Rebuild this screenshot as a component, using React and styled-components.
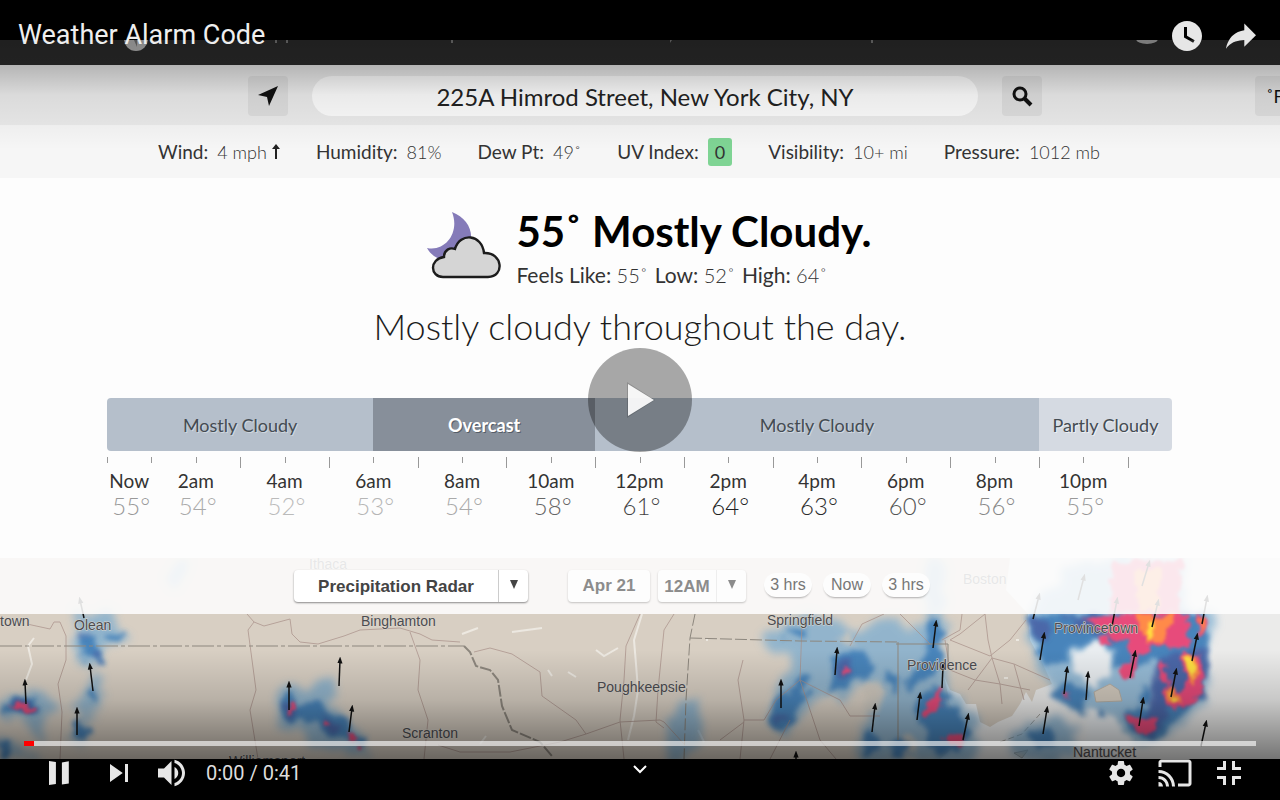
import React from "react";
import styled, { createGlobalStyle } from "styled-components";

const GlobalStyle = createGlobalStyle`
  * { box-sizing: border-box; }
  body { margin: 0; background: #000; font-family: Lato, "Liberation Sans", sans-serif; }
  button, input, select { font: inherit; color: inherit; border: 0; margin: 0; padding: 0; background: none; }
  button { cursor: pointer; }
  h1, h2, p { margin: 0; font-weight: 400; }
`;

const Player = styled.main`
  position: relative;
  min-height: 100vh;
  padding: 40px 0 41px;
  overflow: hidden;
  background: #000;
`;

const Frame = styled.div`
  overflow: hidden;
  background: #fdfdfd;
  color: #333;
`;

const SiteBar = styled.div`
  height: 25px;
  background: #2c2c2c;
  svg { display: block; width: 100%; height: 100%; }
`;

const SearchRow = styled.div`
  display: grid;
  grid-template-columns: 1fr minmax(0, 794px) 1fr;
  padding: 11px 0 9px 10px;
  background: #ebebeb;
`;

const SearchForm = styled.form`
  grid-column: 2;
  display: flex;
  gap: 24px;
`;

const SquareButton = styled.button`
  flex: none;
  display: flex;
  align-items: center;
  justify-content: center;
  width: 40px;
  height: 40px;
  border-radius: 4px;
  background: #dedede;
  color: #111;
`;

const UnitButton = styled(SquareButton)`
  justify-self: end;
  margin-right: -15px;
  font-size: 18px;
`;

const AddressInput = styled.input`
  flex: 1;
  min-width: 0;
  height: 40px;
  border-radius: 20px;
  background: #fcfcfc;
  color: #222;
  font-size: 24px;
  text-align: center;
  outline: none;
`;

const Metrics = styled.div`
  display: flex;
  justify-content: center;
  align-items: center;
  gap: 36px;
  height: 53px;
  padding-right: 22px;
  background: #f6f6f6;
  font-size: 19px;
  line-height: 28px;
  white-space: nowrap;
`;

const Metric = styled.div`
  display: flex;
  gap: 9px;
`;

const MetricValue = styled.span`
  font-size: 18px;
  font-weight: ${(p) => (p.$badge ? 400 : 300)};
  padding: ${(p) => (p.$badge ? "0 7px" : "0")};
  border-radius: 3px;
  background: ${(p) => (p.$badge ? "#7fd494" : "transparent")};
  svg { margin-left: 5px; }
`;

const Current = styled.section`
  display: flex;
  justify-content: center;
  gap: 14px;
  padding: 32px 0 0 18px;
  svg { display: block; }
`;

const Temperature = styled.h1`
  color: #000;
  font-size: 42px;
  font-weight: 700;
  line-height: 43px;
  white-space: nowrap;
`;

const Range = styled.p`
  display: flex;
  gap: 7px;
  padding-top: 8px;
  font-size: 21px;
  line-height: 28px;
  white-space: nowrap;
`;

const Reading = styled.span`
  b { font-weight: 400; }
  span { font-size: 20px; font-weight: 300; }
`;

const Outlook = styled.h2`
  padding-top: 13px;
  font-size: 36px;
  font-weight: 300;
  line-height: 48px;
  text-align: center;
  color: #1c1c1c;
`;

const Timeline = styled.section`
  padding: 48px 108px 38px 107px;
`;

const Segments = styled.div`
  display: flex;
  height: 53px;
  border-radius: 4px;
  overflow: hidden;
`;

const segmentTones = {
  mostly: ["#b5bfcb", "#444b52", "#d0d7de"],
  overcast: ["#878f9a", "#fff", "#555d68"],
  partly: ["#d5dae2", "#444b52", "#eceff3"],
};

const Segment = styled.div`
  flex: ${(p) => p.$hours} 1 0;
  min-width: 0;
  display: flex;
  align-items: center;
  justify-content: center;
  background: ${(p) => segmentTones[p.$tone][0]};
  color: ${(p) => segmentTones[p.$tone][1]};
  text-shadow: 1px 1px 0 ${(p) => segmentTones[p.$tone][2]};
  font-size: 18px;
  font-weight: ${(p) => (p.$tone === "overcast" ? 700 : 400)};
  white-space: nowrap;
`;

const Ticks = styled.div`
  display: grid;
  grid-template-columns: repeat(24, minmax(0, 1fr));
  height: 19px;
  padding-top: 6px;
`;

const Tick = styled.i`
  width: 1px;
  height: ${(p) => (p.$long ? 11 : 6)}px;
  background: #999;
`;

const Hours = styled.div`
  display: grid;
  grid-template-columns: minmax(0, 1fr) repeat(11, minmax(0, 2fr)) minmax(0, 1fr);
`;

const Hour = styled.div`
  display: flex;
  flex-direction: column;
  align-items: center;
  font-size: 19px;
  line-height: 22px;
  white-space: nowrap;
`;

const HourTemp = styled.span`
  padding-left: 4px;
  font-size: 24px;
  font-weight: 300;
  line-height: 28px;
  color: ${(p) => p.$tone};
`;

const MapPanel = styled.section`
  position: relative;
  height: 201px;
  background: #d8cfc3;
`;

const MapArt = styled.svg`
  display: block;
  width: 100%;
  height: 100%;
`;

const MapToolbar = styled.div`
  position: absolute;
  inset: 0 0 auto;
  display: flex;
  justify-content: center;
  align-items: flex-start;
  height: 56px;
  padding: 12px 56px 0 0;
  background: rgba(253, 253, 253, 0.88);
  font-family: "Liberation Sans", Arial, sans-serif;
`;

const SelectBox = styled.div`
  display: flex;
  align-items: stretch;
  height: 32px;
  border-radius: 4px;
  background: ${(p) => (p.$dim ? "#fdfdfd" : "#fff")};
  color: ${(p) => (p.$dim ? "#8c8c8c" : "#444")};
  box-shadow: 0 1px 2px rgba(0, 0, 0, ${(p) => (p.$dim ? 0.22 : 0.45)});
  margin-right: ${(p) => (p.$dim ? 18 : 40)}px;
`;

const Select = styled.select`
  appearance: none;
  width: ${(p) => p.$width}px;
  font-size: 17px;
  font-weight: 700;
  text-align: center;
  text-align-last: center;
`;

const Arrow = styled.span`
  display: flex;
  align-items: center;
  justify-content: center;
  width: 30px;
  padding-bottom: 4px;
  border-left: 1px solid ${(p) => (p.$dim ? "#eee" : "#ccc")};
`;

const DateButton = styled.button`
  width: 82px;
  height: 32px;
  margin-right: 8px;
  border-radius: 4px;
  background: #fdfdfd;
  color: #8c8c8c;
  box-shadow: 0 1px 2px rgba(0, 0, 0, 0.22);
  font-size: 17px;
  font-weight: 700;
`;

const StepGroup = styled.div`
  display: flex;
  gap: 11px;
  padding-top: 3px;
`;

const StepButton = styled.button`
  width: 48px;
  height: 24px;
  border-radius: 12px;
  background: #fdfdfd;
  color: #777;
  box-shadow: 0 2px 2px -1px rgba(0, 0, 0, 0.3);
  font-size: 16px;
`;

const Shade = styled.div`
  position: absolute;
  inset: 0;
  pointer-events: none;
  background:
    linear-gradient(to bottom, rgba(0, 0, 0, 0.35), rgba(0, 0, 0, 0.23) 65px, rgba(0, 0, 0, 0.07) 95px, rgba(0, 0, 0, 0) 150px),
    linear-gradient(to top, rgba(0, 0, 0, 0.56), rgba(0, 0, 0, 0.5) 41px, rgba(0, 0, 0, 0.15) 100px, rgba(0, 0, 0, 0) 150px);
`;

const TopChrome = styled.header`
  position: absolute;
  inset: 0 0 auto;
  display: flex;
  justify-content: space-between;
  padding: 9px 12px 0 18px;
  color: #e6e6e6;
  font-family: Roboto, sans-serif;
`;

const TitleLink = styled.a`
  color: #eee;
  font-size: 27px;
  line-height: 52px;
  text-decoration: none;
`;

const ButtonRow = styled.div`
  display: flex;
  align-items: center;
`;

const ChromeButton = styled.button`
  flex: none;
  width: 54px;
  height: 54px;
  margin-right: ${(p) => p.$after || 0}px;
  color: #e6e6e6;
  svg { display: block; width: 54px; height: 54px; fill: currentColor; }
`;

const BigPlay = styled.button`
  position: absolute;
  top: 50%;
  left: 50%;
  width: 104px;
  height: 104px;
  margin: -52px 0 0 -52px;
  border-radius: 50%;
  background: rgba(0, 0, 0, 0.34);
  svg { display: block; }
`;

const BottomChrome = styled.footer`
  position: absolute;
  inset: auto 0 0;
  font-family: Roboto, sans-serif;
`;

const Progress = styled.div`
  height: 5px;
  margin: 0 24px;
  background: rgba(255, 255, 255, 0.62);
`;

const Played = styled.div`
  height: 5px;
  background: #f00;
`;

const Controls = styled.div`
  display: grid;
  grid-template-columns: 1fr auto 1fr;
  padding: 0 24px 0 31px;
`;

const RightControls = styled(ButtonRow)`
  justify-content: flex-end;
`;

const Time = styled.span`
  padding-left: 6px;
  color: #ddd;
  font-size: 20px;
  line-height: 54px;
`;

const MoreButton = styled.button`
  align-self: start;
  width: 24px;
  height: 24px;
  margin: 11px 7px 0 0;
  svg { display: block; }
`;

const segments = [
  ["Mostly Cloudy", 6, "mostly"],
  ["Overcast", 5, "overcast"],
  ["Mostly Cloudy", 10, "mostly"],
  ["Partly Cloudy", 3, "partly"],
];

const hours = [
  ["Now", 55, "#999"],
  ["2am", 54, "#aaa"],
  ["4am", 52, "#bbb"],
  ["6am", 53, "#b6b6b6"],
  ["8am", 54, "#aaa"],
  ["10am", 58, "#666"],
  ["12pm", 61, "#444"],
  ["2pm", 64, "#222"],
  ["4pm", 63, "#2c2c2c"],
  ["6pm", 60, "#555"],
  ["8pm", 56, "#888"],
  ["10pm", 55, "#999"],
];

const readings = [
  ["Feels Like:", "55˚"],
  ["Low:", "52˚"],
  ["High:", "64˚"],
];

const places = [
  ["town", 0, 626],
  ["Olean", 74, 630],
  ["Ithaca", 309, 569],
  ["Binghamton", 361, 626],
  ["Scranton", 402, 738],
  ["Williamsport", 229, 766],
  ["Poughkeepsie", 597, 692],
  ["Springfield", 767, 625],
  ["Providence", 907, 670],
  ["Boston", 963, 584],
  ["Provincetown", 1054, 633],
  ["Nantucket", 1073, 757],
];

const haze = [
  "M76 612L110 612 120 626 126 638 112 640 104 652 108 662 80 666 70 655 78 640Z",
  "M168 586L178 562 192 558 186 574 172 588Z",
  "M90 672L102 676 104 690 96 704 84 716 100 714 92 722 80 716 66 742 84 750 90 728 78 708Z",
  "M0 700L10 694 38 692 60 704 66 714 44 716 40 744 30 730 22 716 0 714Z",
  "M0 736L20 744 40 759 0 759Z",
  "M282 690L292 688 312 682 336 682 342 692 326 704 336 716 362 734 368 759 340 752 310 744 298 726 282 728 278 712Z",
  "M668 724L682 702 698 696 700 720 706 740 684 759 668 759Z",
  "M760 636L782 622 812 614 860 630 900 616 900 640 870 656 876 680 846 698 822 692 806 714 786 736 768 728 772 690 790 660 764 646Z",
  "M866 650L900 630 945 614 944 660 950 690 968 712 980 726 972 759 858 759 866 724 876 706 884 690 866 680Z",
  "M925 558L942 558 944 614 922 614Z",
  "M1060 576L1070 562 1100 558 1182 558 1184 600 1218 620 1206 645 1204 700 1180 722 1155 742 1120 735 1100 710 1060 700 1040 670 1028 630 1030 614Z",
  "M1008 740L1020 722 1050 718 1072 724 1076 759 1012 759Z",
];

const landGaps = [
  "M862 688L874 676 884 690 880 708 866 712Z",
  "M900 740L912 734 918 750 906 754Z",
  "M836 640L850 632 856 646Z",
];

const blue = [
  "M78 632L90 634 94 646 106 656 104 664 92 662 80 656 86 646Z",
  "M106 638L120 630 124 634 114 642Z",
  "M86 690L96 688 98 698 90 700Z",
  "M72 722L82 722 88 736 74 736Z",
  "M2 706L12 698 32 696 42 706 38 714 26 714 14 710 4 716Z",
  "M0 738L8 744 10 759 0 759Z",
  "M282 698L290 694 300 704 318 704 344 720 360 734 364 746 344 740 318 728 304 716 292 722 282 718Z",
  "M772 702L788 690 800 676 812 678 804 704 782 732 768 724Z",
  "M786 632L810 624 804 634 792 640Z",
  "M832 658L846 652 862 652 874 668 860 680 842 690 826 692 830 676Z",
  "M928 616L940 616 942 632 940 666 930 676 912 690 906 684 920 664 930 640Z",
  "M884 670L896 676 898 694 888 688Z",
  "M914 704L938 686 952 704 970 730 962 748 932 752 924 724Z",
  "M868 728L876 734 880 752 866 754Z",
  "M888 744L900 738 910 754 890 756Z",
  "M1028 614L1202 614 1206 640 1202 698 1180 714 1160 738 1144 742 1128 724 1120 714 1140 708 1156 704 1154 684 1160 668 1146 660 1130 672 1112 666 1118 652 1100 640 1074 646 1066 662 1044 664 1032 640Z",
  "M1052 688L1066 682 1086 694 1084 712 1068 706 1056 700Z",
  "M1030 734L1048 728 1058 740 1046 750 1032 748Z",
  "M1098 710L1108 710 1106 716 1098 716Z",
  "M1138 690L1150 688 1152 702 1140 702Z",
];

const deep = [
  "M78 632L88 632 86 640 78 640Z",
  "M94 654L104 654 102 662 94 660Z",
  "M8 704L30 700 40 710 28 713Z",
  "M284 704L292 700 298 712 288 718Z",
  "M320 714L330 718 342 730 330 730Z",
  "M836 664L852 660 858 670 846 678 836 676Z",
  "M774 718L784 714 786 722 776 726Z",
  "M1030 616L1050 618 1048 632 1042 646 1034 640Z",
  "M1060 616L1120 616 1116 640 1090 634Z",
  "M1156 656L1204 648 1204 694 1170 712 1150 738 1134 726 1150 708Z",
];

const pink = [
  "M10 704L26 702 36 709 32 714 20 708Z",
  "M288 706L293 702 294 712 289 714Z",
  "M325 719L331 719 331 725 325 725Z",
  "M345 733L353 733 358 739 350 740Z",
  "M356 748L363 747 363 753 358 754Z",
  "M838 669L848 666 852 670 842 674Z",
  "M924 710L940 686 944 700 934 712 926 718Z",
  "M944 738L956 734 966 736 962 746 946 742Z",
  "M1082 616L1190 614 1186 634 1196 644 1172 650 1160 640 1148 652 1138 658 1134 680 1120 676 1116 670 1132 660 1128 640 1108 636Z",
  "M1096 638L1110 638 1112 646 1102 646Z",
  "M1196 616L1206 616 1207 634 1200 638Z",
  "M1178 652L1202 656 1202 696 1186 704 1174 710 1164 702 1164 688 1182 692 1188 676Z",
  "M1160 660L1166 664 1168 690 1162 684Z",
  "M1128 716L1158 718 1156 728 1146 736 1134 728Z",
  "M1112 562L1146 558 1182 560 1180 614 1110 612Z",
  "M1062 694L1070 692 1068 700Z",
];

const orange = [
  "M1138 616L1172 616 1166 634 1150 646 1142 632Z",
  "M1186 654L1198 656 1198 684 1190 676Z",
  "M1168 688L1182 694 1180 704 1168 702Z",
  "M1199 618L1205 616 1205 632 1201 634Z",
  "M1136 572L1160 568 1160 612 1140 612Z",
];

const yellow = [
  "M1146 620L1154 622 1153 642 1148 642Z",
  "M1182 656L1193 658 1196 676 1191 674Z",
  "M1171 692L1178 700 1174 704Z",
];

const roads = [
  "M27 624L50 629 54 622 60 622 66 636 66 660 58 684 62 712 60 759",
  "M247 614L254 622 248 630 252 660 256 690 250 710 258 759",
  "M254 622L264 626 290 619 292 634 300 642 318 644 344 636 360 630 400 628 420 634 432 640 460 642",
  "M410 632L420 660 418 690 428 720 424 759",
  "M474 652L490 648 512 654 540 672 542 696 576 720 586 734 620 722 660 720 664 722 684 744",
  "M438 745L460 752 510 752 560 742 586 734",
  "M640 614L626 646 624 680 620 720 624 759",
  "M674 614L664 630 658 690 656 722 664 728",
  "M743 660L738 680 744 720 740 759",
  "M744 720L764 720 776 700 800 680 840 700 850 716 880 716",
  "M802 624L800 680 820 740 836 759",
  "M720 740L744 722 M790 720L770 759",
  "M862 624L884 614 M862 624L850 646 M900 614L930 644",
  "M962 614L960 630 942 640 M985 614L960 634 950 640 990 656 1010 640 1026 620",
  "M985 614L988 640 992 658 968 690",
  "M992 658L1014 664 1050 680",
  "M992 658L1000 684 1002 704 M1014 664L1024 700",
  "M945 640L950 670 975 680 1000 684 1030 690",
];

const winds = [
  [26, 704, 25, 682], [93, 691, 90, 666], [77, 735, 77, 710], [84, 618, 80, 600],
  [289, 710, 289, 684], [339, 686, 340, 660], [349, 732, 352, 708],
  [781, 708, 781, 682], [835, 675, 837, 650], [796, 770, 796, 754],
  [933, 648, 936, 623], [942, 688, 943, 666], [917, 720, 920, 695], [872, 732, 875, 706],
  [963, 740, 968, 716], [1040, 660, 1044, 635], [1033, 619, 1039, 596], [1064, 694, 1067, 669],
  [1086, 700, 1088, 674], [1043, 734, 1047, 709], [1130, 678, 1135, 653], [1112, 626, 1117, 600],
  [1152, 627, 1158, 602], [1171, 697, 1176, 671], [1139, 726, 1143, 700], [1192, 661, 1197, 636],
  [1202, 624, 1207, 598], [1201, 746, 1206, 723], [1142, 586, 1149, 563], [1078, 600, 1084, 577],
];

function Layer({ shapes, color, opacity = 1, filter = "url(#rain)" }) {
  return (
    <g fill={color} opacity={opacity} filter={filter}>
      {shapes.map((d) => <path key={d} d={d} />)}
    </g>
  );
}

function RadarMap() {
  return (
    <MapArt viewBox="0 558 1280 201" preserveAspectRatio="xMidYMid slice" role="img" aria-label="Precipitation radar map">
      <defs>
        <filter id="rain" x="-5%" y="-10%" width="110%" height="120%">
          <feTurbulence type="fractalNoise" baseFrequency="0.09" numOctaves="3" seed="4" result="n" />
          <feDisplacementMap in="SourceGraphic" in2="n" scale="14" xChannelSelector="R" yChannelSelector="G" />
          <feGaussianBlur stdDeviation="1.4" />
        </filter>
        <filter id="soft" x="-5%" y="-10%" width="110%" height="120%">
          <feTurbulence type="fractalNoise" baseFrequency="0.08" numOctaves="3" seed="4" result="n" />
          <feDisplacementMap in="SourceGraphic" in2="n" scale="18" xChannelSelector="R" yChannelSelector="G" />
          <feGaussianBlur stdDeviation="2.4" />
        </filter>
        <filter id="mist" x="-5%" y="-10%" width="110%" height="120%">
          <feTurbulence type="fractalNoise" baseFrequency="0.06" numOctaves="3" seed="9" result="n" />
          <feDisplacementMap in="SourceGraphic" in2="n" scale="22" xChannelSelector="R" yChannelSelector="G" />
          <feGaussianBlur stdDeviation="4" />
        </filter>
        <marker id="head" viewBox="0 0 8 8" refX="4" refY="4" markerWidth="7" markerHeight="7" markerUnits="userSpaceOnUse" orient="auto">
          <path d="M0 1L8 4 0 7Z" fill="#111" />
        </marker>
      </defs>
      <rect x="0" y="558" width="1280" height="201" fill="#ebebea" />
      <path fill="#d8cfc3" d="M0 558H1010L1006 590 1028 614 1030 640 1042 662 1052 684 1036 690 1032 702 1026 692 1020 704 1012 716 998 722 990 727 980 722 976 704 966 704 960 694 950 690 944 676 950 704 960 722 962 740 940 759H0Z" />
      <path fill="none" stroke="#a49f96" strokeDasharray="6 3" d="M1000 742L1022 734 1040 714" />
      <path fill="#d8cfc3" stroke="#aaa59c" d="M1014 753L1028 750 1022 758Z" />
      <g fill="none" stroke="#f2efe9" strokeWidth="2" opacity="0.8">
        <path d="M642 614L634 640 636 664 638 690 634 716 628 740" />
        <path d="M34 638L28 646 32 664 26 680M462 634L478 628M512 632L542 628M596 650L604 656 618 648M548 670L552 676M568 672L576 677M480 744L486 736M698 730L704 742M706 640h2M1016 640h3M1004 678h4" />
      </g>
      <Layer shapes={haze} color="#78abd0" opacity={0.72} filter="url(#mist)" />
      <Layer shapes={landGaps} color="#cfc8bd" opacity={0.8} filter="url(#soft)" />
      <g filter="url(#soft)" fill="#e9edf0">
        <path d="M1074 652L1096 640 1110 654 1112 672 1100 686 1084 680 1072 668Z" />
        <path d="M1086 712L1110 712 1132 740 1116 764 1086 760Z" />
      </g>
      <Layer shapes={blue} color="#417fb9" opacity={0.9} filter="url(#soft)" />
      <Layer shapes={deep} color="#4d589f" opacity={0.65} filter="url(#soft)" />
      <Layer shapes={pink} color="#f04a78" opacity={0.95} />
      <Layer shapes={orange} color="#ff8a48" />
      <Layer shapes={yellow} color="#ffe040" />
      <path fill="#d3cbbf" stroke="#b5afa5" d="M1094 692L1110 684 1119 690 1122 701 1096 702Z" />
      <g fill="none" stroke="#a88f88" strokeWidth="1" opacity="0.7">
        {roads.map((d) => <path key={d} d={d} />)}
      </g>
      <g fill="none" stroke="#8d877e" strokeWidth="1">
        <path strokeDasharray="22 3 4 3" d="M0 646H464" />
        <path strokeWidth="2" strokeDasharray="12 2" d="M464 646L470 652 476 666 490 670 498 680 502 706 512 730 540 742 552 756" />
        <path strokeDasharray="12 3" d="M695 614L690 638 686 700 684 759M690 638L800 641 900 642" />
        <path d="M898 642V740M896 644H948V668" />
      </g>
      <g stroke="#111" strokeWidth="1.5">
        {winds.map(([x1, y1, x2, y2]) => (
          <line key={`${x1}-${y1}`} x1={x1} y1={y1} x2={x2} y2={y2} markerEnd="url(#head)" />
        ))}
      </g>
      <g fontFamily="Liberation Sans, Arial, sans-serif" fontSize="14" fill="#4c4c50" stroke="#ddd8d0" strokeWidth="1" paintOrder="stroke">
        {places.map(([name, x, y]) => <text key={name} x={x} y={y}>{name}</text>)}
      </g>
    </MapArt>
  );
}

function Icon({ d }) {
  return <svg viewBox="0 0 36 36" aria-hidden="true"><path fillRule="evenodd" d={d} /></svg>;
}

const icons = {
  later: "M18 8C12.47 8 8 12.47 8 18C8 23.52 12.47 28 18 28C23.52 28 28 23.52 28 18C28 12.47 23.52 8 18 8ZM16 19.02L16 12L18 12L18 17.86L23.1 20.81L22.1 22.54Z",
  share: "m20.2 14.19 0-4.45 7.79 7.79-7.79 7.62 0-4.56C16.27 20.69 12.1 21.81 9.34 24.76 8.8 25.13 7.6 27.29 8.12 25.65 9.08 21.32 11.8 17.18 15.98 15.38c1.33-.6 2.76-.98 4.21-1.19z",
  pause: "M12 26L16.6 25.4 16.6 10.6 12 10ZM20.6 25.6L25.2 25 25.2 10.2 20.6 11Z",
  next: "M12 24L20.5 18 12 12ZM22 12v12h2V12z",
  volume: "M8 21H12L17 26V10L12 15H8ZM19 14V22C20.48 21.32 21.5 19.77 21.5 18C21.5 16.26 20.48 14.74 19 14ZM19 11.29C21.89 12.15 24 14.83 24 18C24 21.17 21.89 23.85 19 24.71V26.77C23.01 25.86 26 22.28 26 18C26 13.72 23.01 10.14 19 9.23Z",
  settings: "m23.94 18.78c.03-.25.05-.51.05-.78 0-.27-.02-.52-.05-.78l1.68-1.32c.15-.12.19-.33.09-.51l-1.6-2.76c-.09-.17-.31-.24-.48-.17l-1.99.8c-.41-.32-.86-.58-1.35-.78l-.3-2.12c-.02-.19-.19-.33-.39-.33l-3.2 0c-.2 0-.36.14-.39.33l-.3 2.12c-.48.2-.93.47-1.35.78l-1.99-.8c-.18-.07-.39 0-.48.17l-1.6 2.76c-.1.17-.05.39.09.51l1.68 1.32c-.03.25-.05.52-.05.78 0 .26.02.52.05.78l-1.68 1.32c-.15.12-.19.33-.09.51l1.6 2.76c.09.17.31.24.48.17l1.99-.8c.41.32.86.58 1.35.78l.3 2.12c.02.19.19.33.39.33l3.2 0c.2 0 .36-.14.39-.33l.3-2.12c.48-.2.93-.47 1.35-.78l1.99.8c.18.07.39 0 .48-.17l1.6-2.76c.09-.17.05-.39-.09-.51l-1.68-1.32zm-5.94 2.01c-1.54 0-2.8-1.25-2.8-2.8 0-1.54 1.25-2.8 2.8-2.8 1.54 0 2.8 1.25 2.8 2.8 0 1.54-1.25 2.8-2.8 2.8z",
  cast: "M27 9H9c-1.1 0-2 .9-2 2v3h2v-3h18v14h-7v2h7c1.1 0 2-.9 2-2V11C29 9.9 28.1 9 27 9zM7 24v3h3C10 25.34 8.66 24 7 24zM7 20v2c2.76 0 5 2.24 5 5h2C14 23.13 10.87 20 7 20zM7 16v2c4.97 0 9 4.03 9 9h2C18 20.92 13.07 16 7 16z",
  shrink: "m14 14-4 0 0 2 6 0 0-6-2 0zM22 14v-4h-2v6h6v-2zM20 26h2v-4h4v-2h-6zM10 22h4v4h2v-6h-6z",
};

function Caret() {
  return <svg width="8" height="9" viewBox="0 0 8 9" aria-hidden="true"><path d="M0 0H8L4 9Z" fill="currentColor" /></svg>;
}

function WeatherPage() {
  return (
    <Frame>
      <SiteBar>
        <svg viewBox="0 40 1280 25" preserveAspectRatio="xMidYMin slice" aria-hidden="true">
          <circle cx="136" cy="39" r="12" fill="#bbb" />
          <path d="M134 40h3v7zM275 40h2v3h-2zM286 40h2v3h-2zM451 40h2v3h-2zM670 40h2l-2 3zM871 40h2v3h-2z" fill="#777" />
          <ellipse cx="1147" cy="39" rx="11" ry="5" fill="#aaa" />
        </svg>
      </SiteBar>
      <SearchRow>
        <SearchForm onSubmit={(e) => e.preventDefault()}>
          <SquareButton type="button" aria-label="Use my location">
            <svg width="20" height="20" viewBox="0 0 20 20"><path d="M20 0L11 20 9 11 0 9Z" fill="currentColor" /></svg>
          </SquareButton>
          <AddressInput aria-label="Address" defaultValue="225A Himrod Street, New York City, NY" />
          <SquareButton type="submit" aria-label="Search">
            <svg width="22" height="22" viewBox="0 0 22 22" fill="none" stroke="currentColor">
              <circle cx="9" cy="9" r="6" strokeWidth="3" />
              <path d="M13 13L20 20" strokeWidth="4" />
            </svg>
          </SquareButton>
        </SearchForm>
        <UnitButton type="button">˚F</UnitButton>
      </SearchRow>
      <Metrics>
        <Metric>
          <span>Wind:</span>
          <MetricValue>
            4 mph
            <svg width="8" height="15" viewBox="0 0 8 15"><path d="M4 0L8 5H5V15H3V5H0Z" fill="#222" /></svg>
          </MetricValue>
        </Metric>
        <Metric><span>Humidity:</span><MetricValue>81%</MetricValue></Metric>
        <Metric><span>Dew Pt:</span><MetricValue>49˚</MetricValue></Metric>
        <Metric><span>UV Index:</span><MetricValue $badge>0</MetricValue></Metric>
        <Metric><span>Visibility:</span><MetricValue>10+ mi</MetricValue></Metric>
        <Metric><span>Pressure:</span><MetricValue>1012 mb</MetricValue></Metric>
      </Metrics>
      <Current>
        <svg width="76" height="72" viewBox="0 0 76 72" role="img" aria-label="Cloudy night">
          <path d="M26 2C42 8 50 24 42 38L16 50C10 48 4 44 1 38C20 42 34 22 26 2Z" fill="#857bb9" />
          <path d="M17 67C4 67 3 49 18 47C18 40 24 37 29 39C34 22 56 24 58 43C77 42 79 67 62 67Z" fill="#d5d5d5" stroke="#1c1c1c" strokeWidth="2.4" />
        </svg>
        <div>
          <Temperature>55˚ Mostly Cloudy.</Temperature>
          <Range>
            {readings.map(([label, value]) => (
              <Reading key={label}><b>{label}</b> <span>{value}</span></Reading>
            ))}
          </Range>
        </div>
      </Current>
      <Outlook>Mostly cloudy throughout the day.</Outlook>
      <Timeline>
        <Segments>
          {segments.map(([label, span, tone], i) => (
            <Segment key={i} $hours={span} $tone={tone}>{label}</Segment>
          ))}
        </Segments>
        <Ticks>
          {Array.from({ length: 24 }, (_, i) => <Tick key={i} $long={i > 2 && i % 2 === 1} />)}
        </Ticks>
        <Hours>
          {hours.map(([label, temp, tone]) => (
            <Hour key={label}>
              {label}
              <HourTemp $tone={tone}>{temp}°</HourTemp>
            </Hour>
          ))}
        </Hours>
      </Timeline>
      <MapPanel>
        <RadarMap />
        <MapToolbar>
          <SelectBox>
            <Select aria-label="Map layer" $width={204}><option>Precipitation Radar</option></Select>
            <Arrow><Caret /></Arrow>
          </SelectBox>
          <DateButton type="button">Apr 21</DateButton>
          <SelectBox $dim>
            <Select aria-label="Hour" $width={58}><option>12AM</option></Select>
            <Arrow $dim><Caret /></Arrow>
          </SelectBox>
          <StepGroup>
            <StepButton type="button">3 hrs</StepButton>
            <StepButton type="button">Now</StepButton>
            <StepButton type="button">3 hrs</StepButton>
          </StepGroup>
        </MapToolbar>
      </MapPanel>
    </Frame>
  );
}

export default function App() {
  return (
    <Player>
      <GlobalStyle />
      <WeatherPage />
      <Shade />
      <TopChrome>
        <TitleLink href="#">Weather Alarm Code</TitleLink>
        <ButtonRow>
          <ChromeButton aria-label="Watch later"><Icon d={icons.later} /></ChromeButton>
          <ChromeButton aria-label="Share"><Icon d={icons.share} /></ChromeButton>
        </ButtonRow>
      </TopChrome>
      <BigPlay aria-label="Play">
        <svg width="104" height="104" viewBox="0 0 104 104"><path d="M39 34L67 52 39 70Z" fill="#000" opacity="0.15" /><path d="M40 36L66 52 40 68Z" fill="#fff" opacity="0.92" /></svg>
      </BigPlay>
      <BottomChrome>
        <Progress role="progressbar" aria-label="Video position" aria-valuenow={0}><Played style={{ width: `${(0.33 / 41) * 100}%` }} /></Progress>
        <Controls>
          <ButtonRow>
            <ChromeButton aria-label="Pause" $after={7}><Icon d={icons.pause} /></ChromeButton>
            <ChromeButton aria-label="Next"><Icon d={icons.next} /></ChromeButton>
            <ChromeButton aria-label="Mute"><Icon d={icons.volume} /></ChromeButton>
            <Time>0:00 / 0:41</Time>
          </ButtonRow>
          <MoreButton aria-label="More videos">
            <svg width="24" height="24" viewBox="0 0 24 24" fill="none" stroke="#fff" strokeWidth="2"><path d="M6 9L12 15 18 9" /></svg>
          </MoreButton>
          <RightControls>
            <ChromeButton aria-label="Settings"><Icon d={icons.settings} /></ChromeButton>
            <ChromeButton aria-label="Cast"><Icon d={icons.cast} /></ChromeButton>
            <ChromeButton aria-label="Exit full screen"><Icon d={icons.shrink} /></ChromeButton>
          </RightControls>
        </Controls>
      </BottomChrome>
    </Player>
  );
}
